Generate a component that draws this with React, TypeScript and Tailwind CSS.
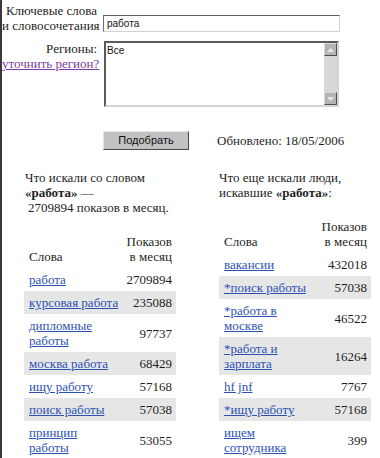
import React from 'react';

type Row = { word: string[]; count: string };

const leftRows: Row[] = [
  { word: ['работа'], count: '2709894' },
  { word: ['курсовая работа'], count: '235088' },
  { word: ['дипломные', 'работы'], count: '97737' },
  { word: ['москва работа'], count: '68429' },
  { word: ['ищу работу'], count: '57168' },
  { word: ['поиск работы'], count: '57038' },
  { word: ['принцип', 'работы'], count: '53055' },
];

const rightRows: Row[] = [
  { word: ['вакансии'], count: '432018' },
  { word: ['*поиск работы'], count: '57038' },
  { word: ['*работа в', 'москве'], count: '46522' },
  { word: ['*работа и', 'зарплата'], count: '16264' },
  { word: ['hf jnf'], count: '7767' },
  { word: ['*ищу работу'], count: '57168' },
  { word: ['ищем', 'сотрудника'], count: '399' },
];

const StatsTable: React.FC<{ rows: Row[] }> = ({ rows }) => (
  <table className="w-[152px] border-collapse mt-[15px]">
    <thead>
      <tr>
        <th className="text-left font-normal align-bottom pl-[5px] py-[4px]">Слова</th>
        <th className="text-right font-normal align-bottom pr-[4px] py-[4px]">
          Показов
          <br />
          в месяц
        </th>
      </tr>
    </thead>
    <tbody>
      {rows.map((r, i) => (
        <tr key={i} className={i % 2 === 1 ? 'bg-[#e6e6e6]' : ''}>
          <td className="pl-[5px] py-[4px] align-middle whitespace-nowrap">
            <a href="#" className="text-[#2c52b4] underline">
              {r.word.map((w, j) => (
                <React.Fragment key={j}>
                  {j > 0 && <br />}
                  {w}
                </React.Fragment>
              ))}
            </a>
          </td>
          <td className="pr-[4px] py-[4px] text-right align-middle">{r.count}</td>
        </tr>
      ))}
    </tbody>
  </table>
);

export default function App() {
  return (
    <div className="w-[380px] h-[458px] overflow-hidden bg-white border-l-2 border-[#3a3a3a] text-[#1e1e1e] text-[13px] leading-[15px] font-['Liberation_Serif','Times_New_Roman',serif]">
      {/* keywords */}
      <div className="flex items-end pt-[3px]">
        <div className="w-[97px] pr-[2px] text-right whitespace-nowrap">
          Ключевые слова
          <br />
          и словосочетания
        </div>
        <div className="ml-[4px] mb-[1px] w-[237px] h-[17px] border border-t-[#5e5e5e] border-l-[#6e6e6e] border-b-[#d2d2d2] border-r-[#d2d2d2] flex items-center pl-[3px] text-[10px] font-['Liberation_Sans',Arial,sans-serif] text-[#111]">
          работа
        </div>
      </div>

      {/* regions */}
      <div className="flex items-start mt-[8px]">
        <div className="w-[97px] pr-[2px] text-right whitespace-nowrap">
          Регионы:
          <br />
          <a href="#" className="text-[#7b3a9e] underline">уточнить регион?</a>
        </div>
        <div className="ml-[5px] w-[235px] h-[66px] flex border-2 border-t-[#5a5a5a] border-l-[#5a5a5a] border-b-[#d4d4d4] border-r-[#d4d4d4]">
          <div className="flex-1 pl-[1px] pt-[2px] text-[10px] leading-[12px] font-['Liberation_Sans',Arial,sans-serif] text-[#111]">
            Все
          </div>
          <div className="w-[13px] flex flex-col bg-[#d8d8d8]">
            <div className="h-[13px] bg-[#b4b4b4] border border-t-[#d8d8d8] border-l-[#d8d8d8] border-b-[#505050] border-r-[#505050] flex items-center justify-center">
              <svg width="7" height="4" viewBox="0 0 7 4">
                <path d="M0 4 L3.5 0 L7 4 Z" fill="#e8e8e8" />
              </svg>
            </div>
            <div className="flex-1" />
            <div className="h-[13px] bg-[#b4b4b4] border border-t-[#d8d8d8] border-l-[#d8d8d8] border-b-[#505050] border-r-[#505050] flex items-center justify-center">
              <svg width="7" height="4" viewBox="0 0 7 4">
                <path d="M0 0 L3.5 4 L7 0 Z" fill="#e8e8e8" />
              </svg>
            </div>
          </div>
        </div>
      </div>

      {/* submit */}
      <div className="flex items-center mt-[24px] pl-[101px]">
        <button className="w-[86px] h-[19px] bg-[#c2c2c2] border border-t-[#e4e4e4] border-l-[#e4e4e4] border-b-[#4a4a4a] border-r-[#4a4a4a] text-[11px] leading-[13px] text-[#111] font-['Liberation_Sans',Arial,sans-serif]">
          Подобрать
        </button>
        <span className="ml-[28px]">Обновлено: 18/05/2006</span>
      </div>

      {/* results */}
      <div className="flex items-start mt-[20px] pl-[22px]">
        <div className="w-[152px]">
          <div className="pl-[1px]">
            Что искали со словом
            <br />
            <b>«работа»</b> —
            <br />
            <span className="pl-[3px]">2709894 показов в месяц.</span>
          </div>
          <StatsTable rows={leftRows} />
        </div>
        <div className="w-[152px] ml-[43px]">
          <div>
            Что еще искали люди,
            <br />
            искавшие <b>«работа»</b>:
          </div>
          <StatsTable rows={rightRows} />
        </div>
      </div>
    </div>
  );
}
